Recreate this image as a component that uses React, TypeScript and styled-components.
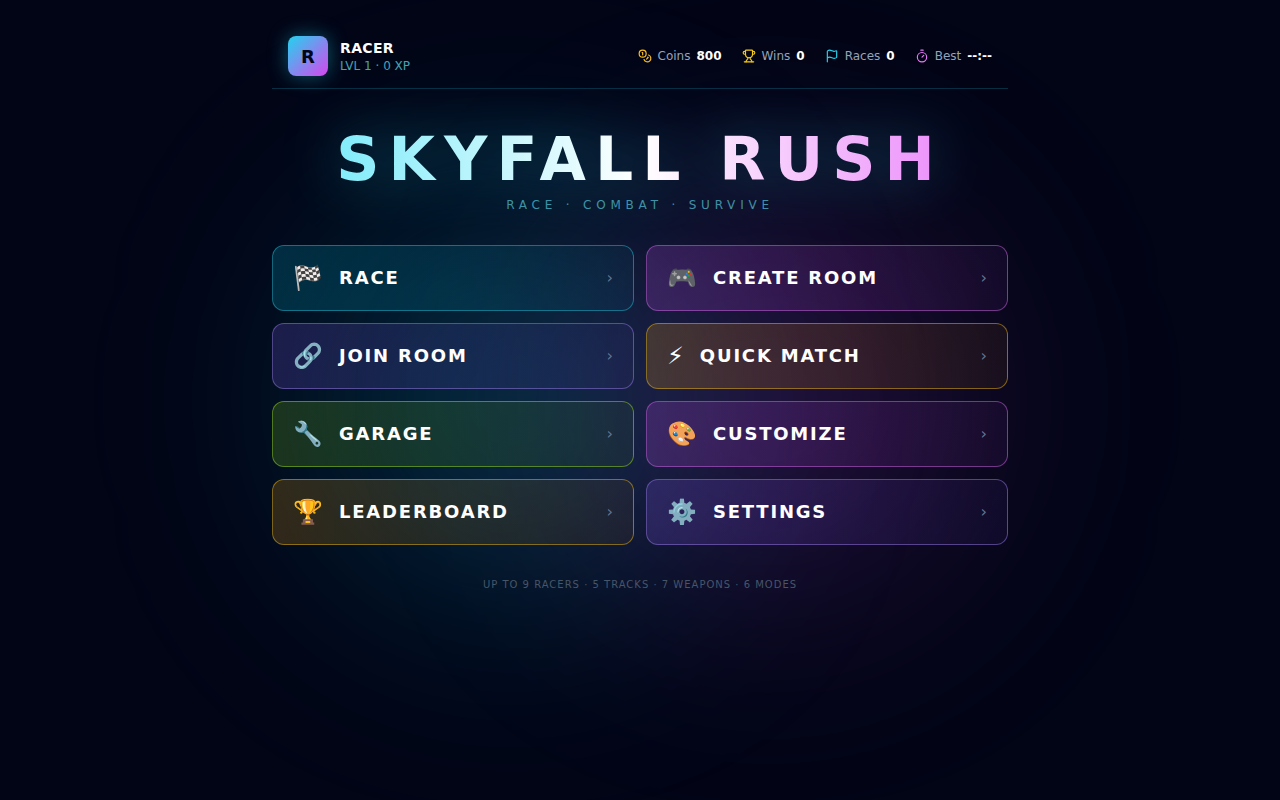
import React from "react";
import styled, { createGlobalStyle } from "styled-components";
import { Coins, Trophy, Flag, Timer } from "lucide-react";

const GlobalStyle = createGlobalStyle`
  *, *::before, *::after { box-sizing: border-box; }
  body {
    margin: 0;
    background: #020516;
    color: #fff;
    font-family: "DejaVu Sans", "Noto Sans", sans-serif;
  }
`;

const Page = styled.div`
  position: relative;
  isolation: isolate;
  overflow: hidden;
  min-height: 100vh;
  background: #020516;
`;

const Glow = styled.div<{ $x: string; $color: string }>`
  position: absolute;
  z-index: -1;
  top: 50%;
  left: ${(p) => p.$x};
  width: 400px;
  height: 400px;
  margin: -200px 0 0 -200px;
  border-radius: 50%;
  background: ${(p) => p.$color};
  filter: blur(110px);
`;

const Container = styled.main`
  max-width: 768px;
  margin: 0 auto;
  padding: 24px 16px;
`;

const Header = styled.header`
  display: flex;
  align-items: center;
  justify-content: space-between;
  padding: 12px 16px;
  border-bottom: 1px solid rgba(34, 211, 238, 0.2);
`;

const Profile = styled.div`
  display: flex;
  align-items: center;
  gap: 12px;
`;

const Avatar = styled.div`
  display: grid;
  place-items: center;
  width: 40px;
  height: 40px;
  border-radius: 8px;
  background: linear-gradient(135deg, #22d3ee, #d946ef);
  box-shadow: 0 0 20px rgba(34, 211, 238, 0.4);
  color: #020617;
  font-size: 18px;
  font-weight: 700;
`;

const Name = styled.div`
  font-size: 14px;
  line-height: 20px;
  font-weight: 700;
  letter-spacing: 0.025em;
`;

const Level = styled.div`
  font-size: 12px;
  line-height: 16px;
  color: rgba(103, 232, 249, 0.7);
`;

const Stats = styled.div`
  display: flex;
  align-items: center;
  gap: 20px;
`;

const Stat = styled.div<{ $color: string }>`
  display: flex;
  align-items: center;
  gap: 6px;
  font-size: 12px;
  line-height: 16px;
  color: #94a3b8;
  svg { color: ${(p) => p.$color}; }
  strong { color: #fff; font-weight: 700; }
`;

const Hero = styled.section`
  margin: 40px 0 32px;
  text-align: center;
`;

const Title = styled.h1`
  margin: 0;
  font-size: 60px;
  line-height: 60px;
  font-weight: 700;
  letter-spacing: 0.15em;
  color: transparent;
  background: linear-gradient(to right, #67e8f9, #fff, #e879f9);
  background-clip: text;
  filter: drop-shadow(0 0 30px rgba(34, 211, 238, 0.4));
`;

const Tagline = styled.p`
  margin: 8px 0 0;
  font-size: 12px;
  line-height: 16px;
  letter-spacing: 0.4em;
  color: rgba(103, 232, 249, 0.6);
`;

const Menu = styled.nav`
  display: grid;
  grid-template-columns: repeat(2, 1fr);
  gap: 12px;
`;

const MenuButton = styled.button<{ $rgb: string; $line: string }>`
  display: flex;
  align-items: center;
  gap: 16px;
  padding: 16px 20px;
  border: 1px solid rgba(${(p) => p.$line}, 0.5);
  border-radius: 12px;
  background: linear-gradient(to right, rgba(${(p) => p.$rgb}, 0.2), rgba(${(p) => p.$rgb}, 0.06));
  color: #fff;
  font-family: inherit;
  text-align: left;
  cursor: pointer;
`;

const Glyph = styled.span`
  font-size: 24px;
  line-height: 32px;
`;

const Label = styled.span`
  flex: 1;
  font-size: 18px;
  line-height: 28px;
  font-weight: 700;
  letter-spacing: 0.1em;
`;

const Chevron = styled.span`
  font-size: 16px;
  line-height: 24px;
  color: #64748b;
`;

const Footer = styled.footer`
  margin-top: 32px;
  text-align: center;
  font-size: 10px;
  line-height: 16px;
  letter-spacing: 0.1em;
  color: #475569;
`;

const stats = [
  { icon: Coins, label: "Coins", value: "800", color: "#fbbf24" },
  { icon: Trophy, label: "Wins", value: "0", color: "#facc15" },
  { icon: Flag, label: "Races", value: "0", color: "#22d3ee" },
  { icon: Timer, label: "Best", value: "--:--", color: "#e879f9" },
];

const tones = {
  cyan: { rgb: "6, 182, 212", line: "34, 184, 207" },
  fuchsia: { rgb: "200, 80, 239", line: "205, 100, 225" },
  violet: { rgb: "139, 92, 246", line: "150, 120, 230" },
  amber: { rgb: "245, 158, 11", line: "234, 179, 20" },
  lime: { rgb: "132, 204, 22", line: "150, 215, 30" },
};

const menu = [
  { glyph: "🏁", label: "RACE", tone: tones.cyan },
  { glyph: "🎮", label: "CREATE ROOM", tone: tones.fuchsia },
  { glyph: "🔗", label: "JOIN ROOM", tone: tones.violet },
  { glyph: "⚡", label: "QUICK MATCH", tone: tones.amber },
  { glyph: "🔧", label: "GARAGE", tone: tones.lime },
  { glyph: "🎨", label: "CUSTOMIZE", tone: tones.fuchsia },
  { glyph: "🏆", label: "LEADERBOARD", tone: tones.amber },
  { glyph: "⚙️", label: "SETTINGS", tone: tones.violet },
];

export default function App() {
  return (
    <>
      <GlobalStyle />
      <Page>
        <Glow $x="40%" $color="rgba(6, 182, 212, 0.22)" />
        <Glow $x="60%" $color="rgba(192, 60, 220, 0.18)" />
        <Container>
          <Header>
            <Profile>
              <Avatar>R</Avatar>
              <div>
                <Name>RACER</Name>
                <Level>LVL 1 · 0 XP</Level>
              </div>
            </Profile>
            <Stats>
              {stats.map(({ icon: Icon, label, value, color }) => (
                <Stat key={label} $color={color}>
                  <Icon size={14} aria-hidden />
                  <span>{label}</span>
                  <strong>{value}</strong>
                </Stat>
              ))}
            </Stats>
          </Header>
          <Hero>
            <Title>SKYFALL RUSH</Title>
            <Tagline>RACE · COMBAT · SURVIVE</Tagline>
          </Hero>
          <Menu>
            {menu.map((m) => (
              <MenuButton key={m.label} type="button" $rgb={m.tone.rgb} $line={m.tone.line}>
                <Glyph>{m.glyph}</Glyph>
                <Label>{m.label}</Label>
                <Chevron>›</Chevron>
              </MenuButton>
            ))}
          </Menu>
          <Footer>UP TO 9 RACERS · 5 TRACKS · 7 WEAPONS · 6 MODES</Footer>
        </Container>
      </Page>
    </>
  );
}
